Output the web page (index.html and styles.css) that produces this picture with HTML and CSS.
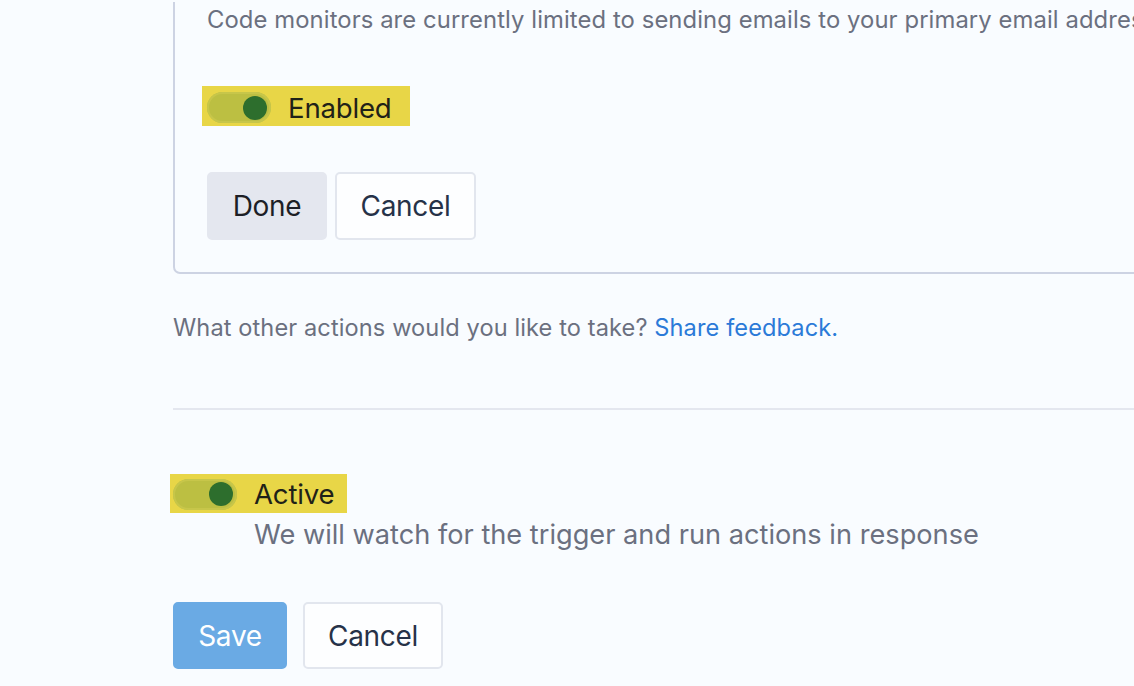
FILE: index.html
```html
<!DOCTYPE html>
<html>
<head>
<meta charset="utf-8">
<link rel="stylesheet" href="styles.css">
</head>
<body>
<div class="page">
  <div class="card">
    <p class="card-desc">Code monitors are currently limited to sending emails to your primary email address.</p>
    <label class="toggle-row hl toggle-row-card">
      <span class="toggle"><span class="knob"></span></span>
      <span class="toggle-label">Enabled</span>
    </label>
    <div class="btn-row btn-row-card">
      <button class="btn btn-secondary">Done</button>
      <button class="btn btn-outline">Cancel</button>
    </div>
  </div>
  <p class="other">What other actions would you like to take? <a class="link" href="#">Share feedback.</a></p>
  <hr class="divider">
  <div class="active-block">
    <label class="toggle-row hl toggle-row-active">
      <span class="toggle"><span class="knob"></span></span>
      <span class="toggle-label">Active</span>
    </label>
    <p class="active-desc">We will watch for the trigger and run actions in response</p>
  </div>
  <div class="btn-row btn-row-main">
    <button class="btn btn-primary">Save</button>
    <button class="btn btn-outline btn-cancel-main">Cancel</button>
  </div>
</div>
<div class="bottom-bar"></div>
</body>
</html>
```

FILE: styles.css
```css
html, body {
  margin: 0;
  padding: 0;
  background: #f9fcff;
  overflow: hidden;
  height: 686px;
}
body {
  font-family: Inter, "Noto Sans", sans-serif;
  color: #1f2218;
  position: relative;
}
.page {
  padding-left: 173px;
  width: 1400px;
  height: 684px;
  box-sizing: border-box;
}
.card {
  width: 1100px;
  border: 2px solid #cdd3e3;
  border-top: none;
  border-radius: 0 0 7px 7px;
  padding: 0 0 32px 32px;
  box-sizing: border-box;
}
.card-desc {
  margin: 2px 0 0;
  font-size: 23.8px;
  line-height: 36px;
  color: #6b7080;
  white-space: nowrap;
  letter-spacing: 0.1px;
}
.toggle-row {
  display: flex;
  align-items: center;
  width: max-content;
  box-sizing: border-box;
}
.hl {
  background: #e8d647;
}
.toggle-row-card {
  margin: 48px 0 0 -5px;
  height: 40px;
  padding: 3px 18px 0 5px;
}
.toggle-row-active {
  margin: 64px 0 0 -3px;
  height: 39px;
  padding: 1px 13px 0 3px;
}
.toggle {
  width: 64px;
  height: 31px;
  border-radius: 16px;
  background: #bcbf42;
  box-shadow: inset 0 0 0 2px #c7c64a;
  display: flex;
  align-items: center;
  justify-content: flex-end;
  padding-right: 4px;
  box-sizing: border-box;
}
.knob {
  width: 24px;
  height: 24px;
  border-radius: 50%;
  background: #2d6e2d;
}
.toggle-label {
  font-size: 27.6px;
  line-height: 32px;
  margin-left: 17px;
  color: #1f2218;
  letter-spacing: -0.2px;
}
.btn-row {
  display: flex;
}
.btn-row-card {
  margin-top: 46px;
  gap: 8px;
}
.btn-row-main {
  margin-top: 52px;
  gap: 16px;
}
.btn {
  font-family: Inter, "Noto Sans", sans-serif;
  font-size: 28px;
  letter-spacing: -0.3px;
  height: 68px;
  border-radius: 5px;
  border: 2px solid transparent;
  padding: 0;
  box-sizing: border-box;
  cursor: pointer;
}
.btn-secondary {
  width: 120px;
  background: #e4e7ef;
  border-color: #e4e7ef;
  color: #1d1f26;
}
.btn-outline {
  width: 141px;
  background: #fdfeff;
  border-color: #e2e6ee;
  color: #263248;
}
.btn-primary {
  width: 114px;
  height: 67px;
  background: #6aaae4;
  border-color: #6aaae4;
  color: #ffffff;
}
.btn-cancel-main {
  width: 140px;
  height: 67px;
}
.other {
  margin: 37px 0 0;
  font-size: 23.6px;
  line-height: 33px;
  color: #6b7080;
  letter-spacing: 0.1px;
}
.link {
  color: #2b7ad8;
  text-decoration: none;
}
.divider {
  margin: 64px 0 0;
  border: none;
  height: 2px;
  background: #e4e7ef;
  width: 1100px;
}
.active-desc {
  margin: 7px 0 0 81px;
  font-size: 27.2px;
  line-height: 30px;
  color: #6b7080;
}
.bottom-bar {
  height: 2px;
  background: #e3e3e3;
}
```
